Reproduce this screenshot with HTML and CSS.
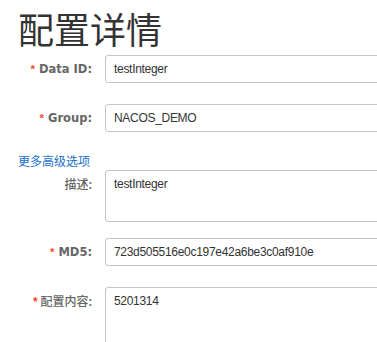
FILE: index.html
```html
<!DOCTYPE html>
<html lang="zh">
<head>
<meta charset="utf-8">
<link rel="stylesheet" href="styles.css">
</head>
<body>
<div class="page">
  <h1 class="title">配置详情</h1>
  <div class="form">
    <div class="row">
      <div class="label"><span class="req">*</span> Data ID:</div>
      <div class="control">testInteger</div>
    </div>
    <div class="row">
      <div class="label"><span class="req">*</span> Group:</div>
      <div class="control">NACOS_DEMO</div>
    </div>
    <div class="more">更多高级选项</div>
    <div class="row row-desc">
      <div class="label label-cjk">描述:</div>
      <div class="control area area-desc">testInteger</div>
    </div>
    <div class="row">
      <div class="label"><span class="req">*</span> MD5:</div>
      <div class="control">723d505516e0c197e42a6be3c0af910e</div>
    </div>
    <div class="row">
      <div class="label label-cjk"><span class="req">*</span> 配置内容:</div>
      <div class="control area area-content">5201314</div>
    </div>
  </div>
</div>
</body>
</html>
```

FILE: styles.css
```css
html, body {
  margin: 0;
  padding: 0;
  overflow: hidden;
  background: #fff;
}
.page {
  width: 377px;
  height: 342px;
  overflow: hidden;
  font-family: "Liberation Sans", "Noto Sans CJK SC", sans-serif;
  color: #333;
}
.title {
  margin: 10px 0 0 0;
  padding-left: 18px;
  font-family: "Noto Sans CJK SC", sans-serif;
  font-weight: 400;
  font-size: 36px;
  line-height: 36px;
  color: #333;
}
.form {
  margin-top: 9px;
}
.row {
  display: flex;
  align-items: flex-start;
  margin-bottom: 21px;
}
.row-desc {
  margin-bottom: 16px;
}
.label {
  flex: 0 0 105px;
  box-sizing: border-box;
  padding-right: 13px;
  text-align: right;
  font-family: "DejaVu Sans", "Noto Sans CJK SC", sans-serif;
  font-weight: bold;
  font-size: 11.5px;
  line-height: 28px;
  color: #666;
}
.label-cjk {
  font-family: "Noto Sans CJK SC", sans-serif;
  font-weight: 500;
  font-size: 12px;
}
.req {
  color: #f8492a;
  font-family: "Liberation Sans", sans-serif;
  font-weight: bold;
}
.control {
  flex: 0 0 400px;
  box-sizing: border-box;
  height: 28px;
  border: 1px solid #c4c6cf;
  border-radius: 3px;
  padding: 0 8px;
  font-size: 12px;
  letter-spacing: -0.3px;
  line-height: 26px;
  color: #333;
  white-space: nowrap;
}
.area {
  padding-top: 4px;
  line-height: 18px;
}
.area-desc {
  height: 52px;
}
.area-content {
  height: 100px;
}
.more {
  margin-top: -1px;
  padding-left: 18px;
  height: 18px;
  line-height: 18px;
  font-family: "Noto Sans CJK SC", sans-serif;
  font-size: 12px;
  color: #1a6fca;
}
```
